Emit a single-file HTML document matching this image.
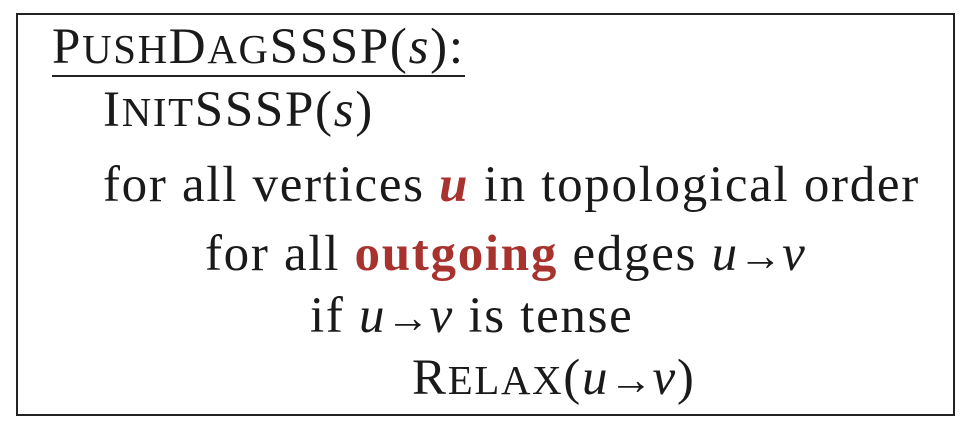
<!DOCTYPE html>
<html><head><meta charset="utf-8"><style>
html,body{margin:0;padding:0;background:#fff;}
body{width:976px;height:436px;position:relative;overflow:hidden;font-family:"Liberation Serif",serif;color:#1a1a1a;}
.box{position:absolute;left:16px;top:13px;width:939px;height:403px;border:2px solid #222;box-sizing:border-box;}
.l{position:absolute;font-size:51px;white-space:nowrap;line-height:1;letter-spacing:1.7px;}
.s{font-size:0.8em;}
.r{color:#a8332e;font-weight:bold;}
i{font-style:italic;}
.a{letter-spacing:0;font-size:0.85em;}
</style></head><body>
<div class="box"></div>
<div class="l" style="left:52px;top:22px;"><span style="border-bottom:2px solid #222;padding-bottom:0px;">P<span class="s">USH</span>D<span class="s">AG</span>SSSP(<i>s</i>):</span></div>
<div class="l" style="left:103px;top:85px;">I<span class="s">NIT</span>SSSP(<i>s</i>)</div>
<div class="l" style="left:103px;top:160px;">for all vertices <i class="r">u</i> in topological order</div>
<div class="l" style="left:205px;top:229px;">for all <span class="r">outgoing</span> edges <i>u</i><span class="a">→</span><i>v</i></div>
<div class="l" style="left:310px;top:291px;">if <i>u</i><span class="a">→</span><i>v</i> is tense</div>
<div class="l" style="left:412px;top:353px;">R<span class="s">ELAX</span>(<i>u</i><span class="a">→</span><i>v</i>)</div>
</body></html>
